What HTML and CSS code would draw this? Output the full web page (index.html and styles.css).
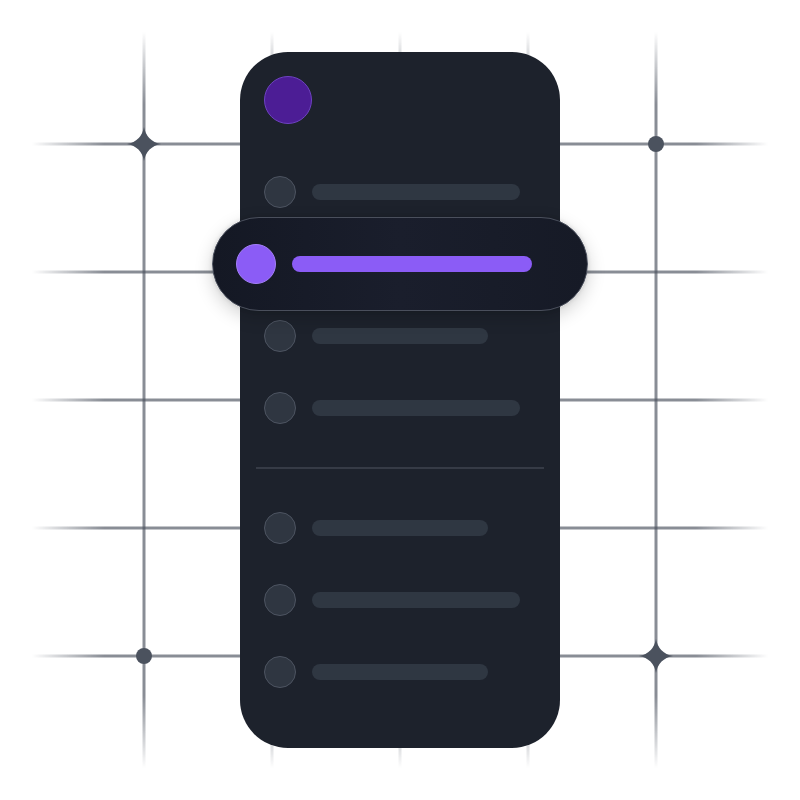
FILE: index.html
```html
<!DOCTYPE html>
<html lang="en">
<head>
<meta charset="utf-8">
<title>Menu</title>
<link rel="stylesheet" href="styles.css">
</head>
<body>
<div class="stage">
  <div class="grid grid-v"></div>
  <div class="grid grid-h"></div>

  <svg class="mark star star-tl" viewBox="0 0 32 32"><path d="M16 0 Q18.5 13.5 32 16 Q18.5 18.5 16 32 Q13.5 18.5 0 16 Q13.5 13.5 16 0 Z"/></svg>
  <svg class="mark star star-br" viewBox="0 0 32 32"><path d="M16 0 Q18.5 13.5 32 16 Q18.5 18.5 16 32 Q13.5 18.5 0 16 Q13.5 13.5 16 0 Z"/></svg>
  <span class="mark dot dot-tr"></span>
  <span class="mark dot dot-bl"></span>

  <div class="panel">
    <div class="panel-head">
      <span class="avatar"></span>
    </div>
    <ul class="menu">
      <li class="item"><span class="bullet"></span><span class="bar bar-long"></span></li>
      <li class="item item-active"><span class="bullet"></span><span class="bar"></span></li>
      <li class="item"><span class="bullet"></span><span class="bar bar-short"></span></li>
      <li class="item"><span class="bullet"></span><span class="bar bar-long"></span></li>
    </ul>
    <hr class="divider">
    <ul class="menu">
      <li class="item"><span class="bullet"></span><span class="bar bar-short"></span></li>
      <li class="item"><span class="bullet"></span><span class="bar bar-long"></span></li>
      <li class="item"><span class="bullet"></span><span class="bar bar-short"></span></li>
    </ul>
  </div>
</div>
</body>
</html>
```

FILE: styles.css
```css
* { box-sizing: border-box; }

html, body {
  margin: 0;
  padding: 0;
  background: #ffffff;
  font-family: "Inter", "Liberation Sans", sans-serif;
}

.stage {
  position: relative;
  width: 800px;
  height: 800px;
  display: flex;
  justify-content: center;
  align-items: center;
}

/* background grid canvas */
.grid {
  position: absolute;
  left: 32px;
  top: 32px;
  width: 736px;
  height: 736px;
  pointer-events: none;
}

.grid-v {
  background-image: linear-gradient(to right, rgba(75, 82, 94, 0.66) 0 3px, transparent 3px);
  background-size: 128px 100%;
  background-position: 110.5px 0;
  background-repeat: repeat-x;
  -webkit-mask-image: linear-gradient(to bottom, transparent 0, #000 72px, #000 calc(100% - 72px), transparent 100%);
  mask-image: linear-gradient(to bottom, transparent 0, #000 72px, #000 calc(100% - 72px), transparent 100%);
}

.grid-h {
  background-image: linear-gradient(to bottom, rgba(75, 82, 94, 0.66) 0 3px, transparent 3px);
  background-size: 100% 128px;
  background-position: 0 110.5px;
  background-repeat: repeat-y;
  -webkit-mask-image: linear-gradient(to right, transparent 0, #000 72px, #000 calc(100% - 72px), transparent 100%);
  mask-image: linear-gradient(to right, transparent 0, #000 72px, #000 calc(100% - 72px), transparent 100%);
}

/* markers placed on grid intersections */
.mark { position: absolute; }

.star {
  width: 34px;
  height: 34px;
  fill: #4b525e;
}
.star-tl { left: 127px; top: 127px; }
.star-br { left: 639px; top: 639px; }

.dot {
  width: 16px;
  height: 16px;
  border-radius: 50%;
  background: #4b525e;
}
.dot-tr { left: 648px; top: 136px; }
.dot-bl { left: 136px; top: 648px; }

/* panel */
.panel {
  position: relative;
  width: 320px;
  height: 696px;
  background: #1d222c;
  border-radius: 48px;
  padding: 24px 24px 40px;
  display: flex;
  flex-direction: column;
}

.panel-head {
  height: 48px;
  margin-bottom: 32px;
  display: flex;
  align-items: center;
}

.avatar {
  width: 48px;
  height: 48px;
  border-radius: 50%;
  background: #4c1d95;
  border: 1.5px solid #6e42c1;
}

.menu {
  list-style: none;
  margin: 0;
  padding: 0;
  display: flex;
  flex-direction: column;
}

.item {
  height: 72px;
  display: flex;
  align-items: center;
  gap: 16px;
}

.bullet {
  flex: none;
  width: 32px;
  height: 32px;
  border-radius: 50%;
  background: #2f3641;
  border: 1.5px solid #4d5461;
}

.bar {
  display: block;
  height: 16px;
  border-radius: 8px;
  background: #2f3742;
}
.bar-long { width: 208px; }
.bar-short { width: 176px; }

.item-active {
  height: 94px;
  margin: -11px -52px;
  padding: 0 55px 0 23px;
  border-radius: 47px;
  background: linear-gradient(to right, #141824, #1a1e2c 50%, #161a26);
  border: 1.5px solid #4a4f5c;
  box-shadow: 0 6px 18px rgba(0, 0, 0, 0.18), 0 0 4px rgba(0, 0, 0, 0.12);
  gap: 16px;
  position: relative;
  z-index: 1;
}
.item-active .bullet {
  width: 40px;
  height: 40px;
  background: #8b5cf6;
  border-color: #a37ff8;
}
.item-active .bar {
  flex: 1;
  background: #8b5cf6;
}

.divider {
  margin: 23px -8px 23px;
  border: 0;
  height: 2px;
  background: #363b46;
}
```
